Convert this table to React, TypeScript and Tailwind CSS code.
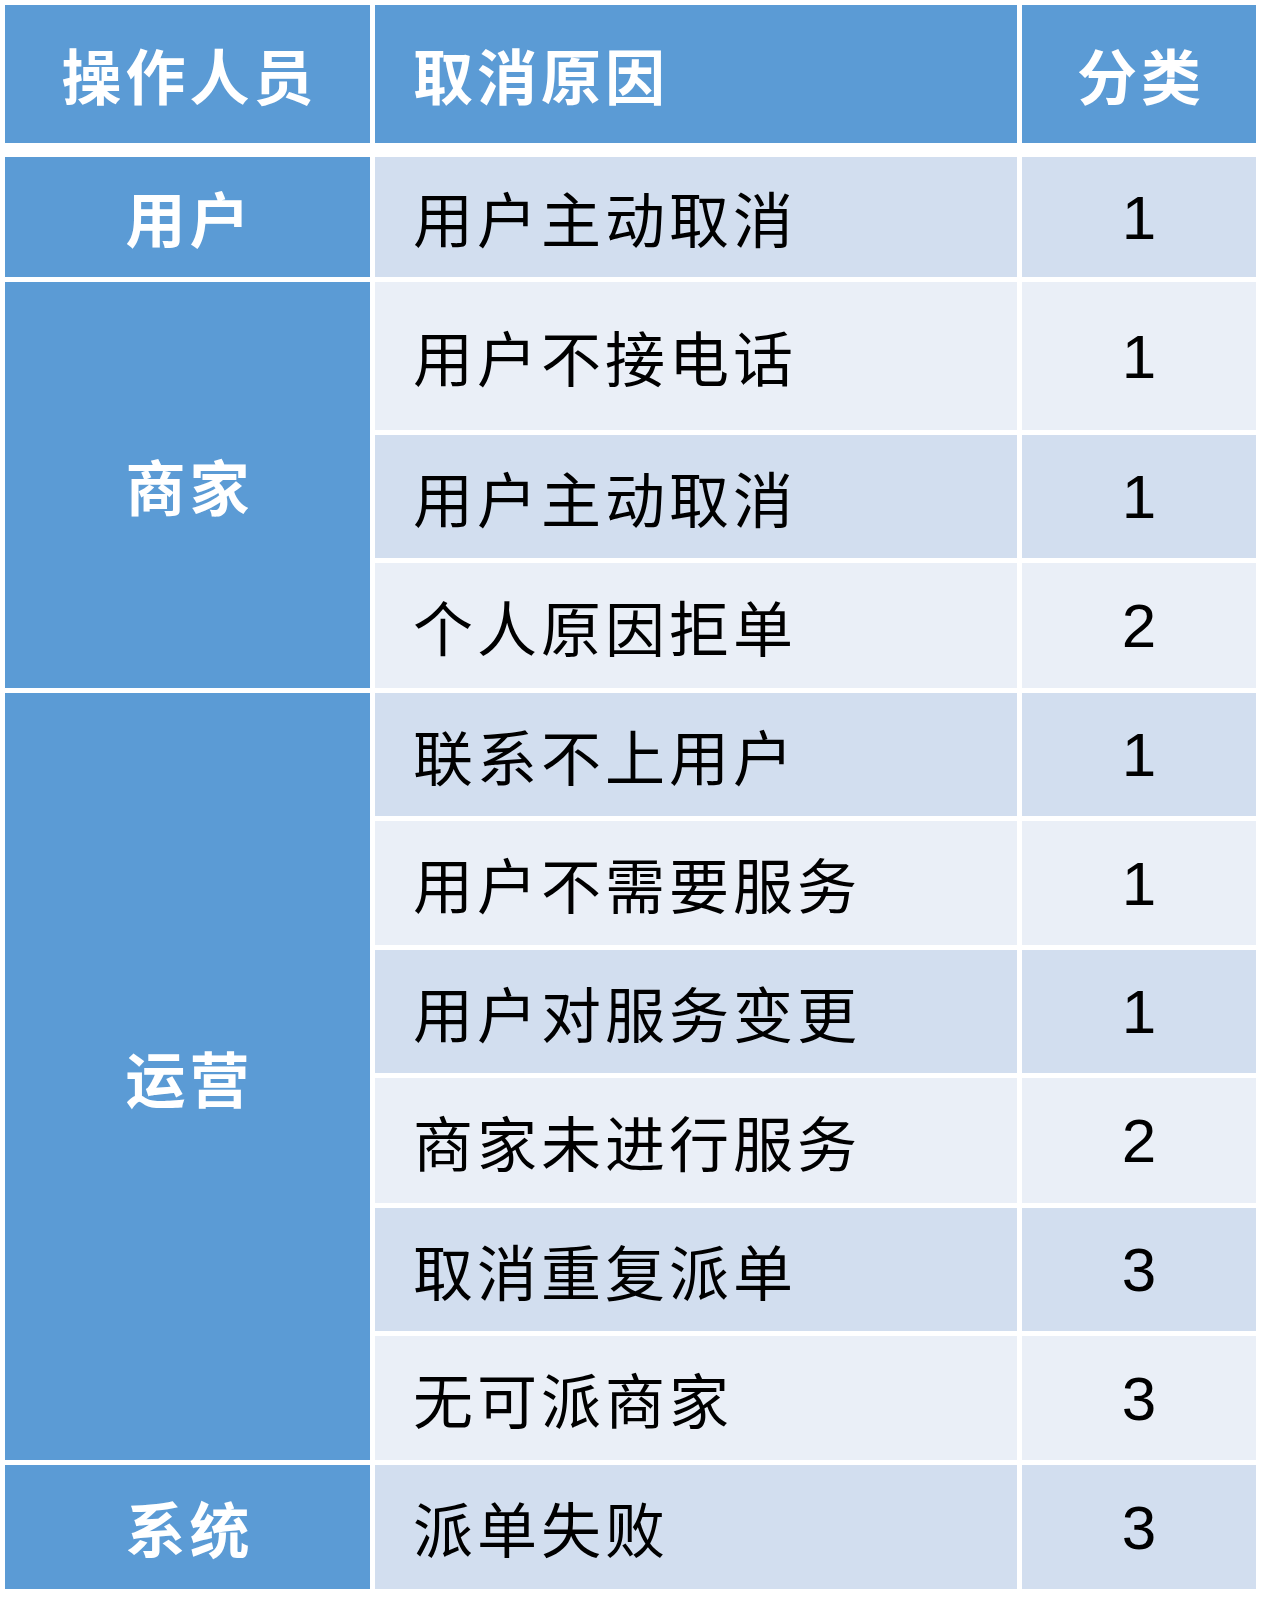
const rows: { reason: string; cat: string; h: string }[] = [
  { reason: "用户主动取消", cat: "1", h: "h-[120px]" },
  { reason: "用户不接电话", cat: "1", h: "h-[148px]" },
  { reason: "用户主动取消", cat: "1", h: "h-[123px]" },
  { reason: "个人原因拒单", cat: "2", h: "h-[125px]" },
  { reason: "联系不上用户", cat: "1", h: "h-[123px]" },
  { reason: "用户不需要服务", cat: "1", h: "h-[124px]" },
  { reason: "用户对服务变更", cat: "1", h: "h-[123px]" },
  { reason: "商家未进行服务", cat: "2", h: "h-[125px]" },
  { reason: "取消重复派单", cat: "3", h: "h-[123px]" },
  { reason: "无可派商家", cat: "3", h: "h-[124px]" },
  { reason: "派单失败", cat: "3", h: "h-[124px]" },
];

const operators = [
  { name: "用户", span: "row-span-1" },
  { name: "商家", span: "row-span-3" },
  { name: "运营", span: "row-span-6" },
  { name: "系统", span: "row-span-1" },
];

const cjk = "font-['Noto_Sans_CJK_SC',sans-serif]";

export default function App() {
  return (
    <div className="min-h-[1606px] w-[1268px] bg-white pl-[5px] pt-[5px]">
      <div className={`grid h-[138px] grid-cols-[365px_642px_234px] gap-x-[5px] text-[60px] font-semibold tracking-[4px] text-white ${cjk}`}>
        <div className="flex items-center justify-center bg-[#5b9bd5] pl-[4px]">操作人员</div>
        <div className="flex items-center bg-[#5b9bd5] pl-[38px]">取消原因</div>
        <div className="flex items-center justify-center bg-[#5b9bd5] pl-[4px]">分类</div>
      </div>

      <div className="mt-[14px] grid grid-cols-[365px_876px] gap-x-[5px]">
        <div className="grid grid-rows-[120px_148px_123px_125px_123px_124px_123px_125px_123px_124px_124px] gap-y-[5px]">
          {operators.map((op) => (
            <div
              key={op.name}
              className={`${op.span} flex items-center justify-center bg-[#5b9bd5] pl-[4px] text-[60px] font-semibold tracking-[4px] text-white ${cjk}`}
            >
              {op.name}
            </div>
          ))}
        </div>

        <div className="flex flex-col gap-y-[5px]">
          {rows.map((row, i) => {
            const bg = i % 2 === 0 ? "bg-[#d2deef]" : "bg-[#eaeff7]";
            return (
              <div key={i} className={`grid ${row.h} grid-cols-[642px_234px] gap-x-[5px]`}>
                <div className={`flex items-center ${bg} pl-[38px] text-[60px] tracking-[4px] text-black ${cjk}`}>
                  {row.reason}
                </div>
                <div className={`flex items-center justify-center ${bg} font-['Liberation_Sans',sans-serif] text-[62px] text-black`}>
                  {row.cat}
                </div>
              </div>
            );
          })}
        </div>
      </div>
    </div>
  );
}
